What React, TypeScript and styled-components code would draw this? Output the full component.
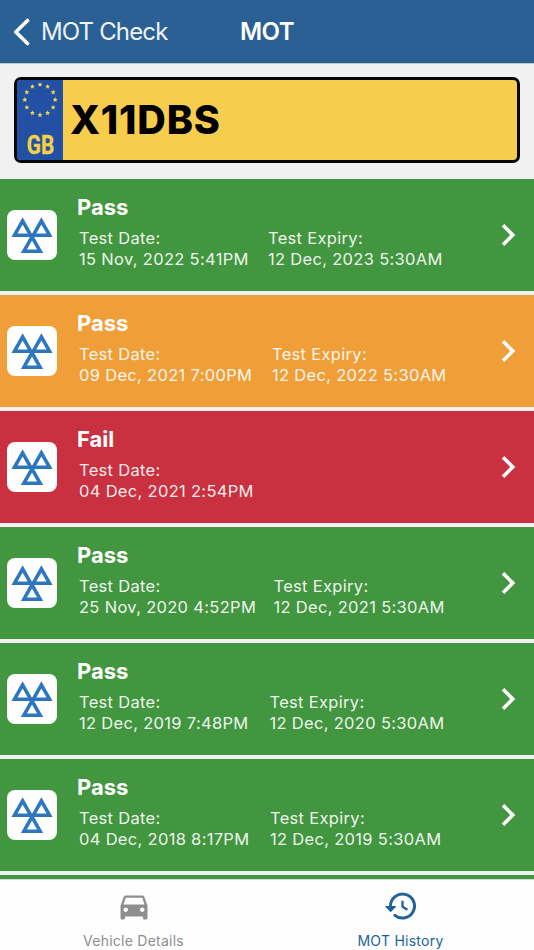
import React from "react";
import styled, { createGlobalStyle } from "styled-components";
import { MdChevronRight, MdDirectionsCar } from "react-icons/md";

const GlobalStyle = createGlobalStyle`
  * { box-sizing: border-box; }
  body { margin: 0; background: #f1f1f1; font-family: Inter, "Liberation Sans", sans-serif; }
`;

const Screen = styled.div`
  display: flex;
  flex-direction: column;
  height: 950px;
  overflow: hidden;
  background: #f1f1f1;
`;

const Header = styled.header`
  display: grid;
  grid-template-columns: 1fr auto 1fr;
  align-items: center;
  flex: none;
  height: 63px;
  color: #fff;
  background: #2a6093;
  box-shadow: 0 1px 0 #bcc6d0;
`;

const BackButton = styled.button`
  display: flex;
  align-items: center;
  gap: 11px;
  padding: 0 0 0 12px;
  border: 0;
  background: none;
  color: #edf3f8;
  font: 400 24px/30px Inter, sans-serif;
  letter-spacing: -0.85px;
  white-space: nowrap;
`;

const Title = styled.h1`
  margin: 0;
  font-size: 24px;
  line-height: 30px;
  font-weight: 600;
  letter-spacing: -0.5px;
`;

const PlateArea = styled.section`
  display: flex;
  flex: none;
  height: 116px;
  padding: 14px 14px 16px;
`;

const Plate = styled.div`
  display: flex;
  flex: 1;
  overflow: hidden;
  border: 3px solid #080808;
  border-radius: 7px;
  background: #f7cd4d;
`;

const CountryBand = styled.div`
  display: flex;
  flex-direction: column;
  align-items: center;
  width: 46px;
  background: #2150a5;
`;

const CountryCode = styled.span`
  margin-top: 14px;
  color: #f4d147;
  font: 700 25px/28px Roboto, sans-serif;
  -webkit-text-stroke: 0.4px #f4d147;
  transform: scaleX(0.83);
`;

const Registration = styled.span`
  align-self: center;
  margin-left: 7px;
  color: #000;
  font-size: 39.5px;
  line-height: 46px;
  font-weight: 800;
  letter-spacing: 0.8px;
`;

const History = styled.main`
  display: flex;
  flex-direction: column;
  flex: 1;
  gap: 4px;
  min-height: 0;
  overflow: hidden;
`;

const tones = { green: "#439640", amber: "#f09e38", red: "#c93140" };

const Row = styled.article<{ $tone: keyof typeof tones }>`
  display: grid;
  grid-template-columns: 50px 1fr 44px;
  align-items: center;
  column-gap: 20px;
  flex: none;
  height: 112px;
  padding: 0 4px 0 7px;
  color: #fff;
  background: ${({ $tone }) => tones[$tone]};
`;

const LogoTile = styled.div`
  display: flex;
  width: 50px;
  height: 50px;
  border-radius: 8px;
  background: #fff;
`;

const Summary = styled.div`
  padding-bottom: 7px;
`;

const Result = styled.h2`
  margin: 0 0 7px;
  font-size: 22px;
  line-height: 28px;
  font-weight: 700;
`;

const Tests = styled.div<{ $offset: number }>`
  display: grid;
  grid-template-columns: ${({ $offset }) => $offset}px auto;
  padding-left: 2px;
`;

const Detail = styled.div`
  color: rgba(255, 255, 255, 0.93);
  font-size: 16.5px;
  line-height: 20.7px;
  letter-spacing: 0.31px;
  white-space: nowrap;
`;

const TabBar = styled.nav`
  display: grid;
  grid-template-columns: 1fr 1fr;
  flex: none;
  height: 70px;
  background: #fefefe;
  box-shadow: 0 -1px 0 #d6dbd6;
`;

const Tab = styled.button<{ $active?: boolean }>`
  display: flex;
  flex-direction: column;
  align-items: center;
  padding: 8px 0 0;
  border: 0;
  background: none;
  color: ${({ $active }) => ($active ? "#20639b" : "#8e8e8e")};
  font: 400 14px/18px Inter, sans-serif;
  letter-spacing: 0.25px;
`;

const TabLabel = styled.span`
  margin-top: 8px;
`;

const starPoints = Array.from({ length: 10 }, (_, i) => {
  const r = i % 2 ? 1.2 : 2.7;
  const a = (i * Math.PI) / 5 - Math.PI / 2;
  return `${(r * Math.cos(a)).toFixed(2)},${(r * Math.sin(a)).toFixed(2)}`;
}).join(" ");

const Stars = () => (
  <svg width="40" height="38" viewBox="0 0 40 38" fill="#f2d64c">
    {Array.from({ length: 12 }, (_, i) => {
      const a = (i * Math.PI) / 6;
      return (
        <polygon
          key={i}
          points={starPoints}
          transform={`translate(${20 + 15.2 * Math.sin(a)} ${19.8 - 15.2 * Math.cos(a)})`}
        />
      );
    })}
  </svg>
);

const BackIcon = () => (
  <svg width="18" height="30" viewBox="0 0 18 30" fill="none" stroke="#fff" strokeWidth="3.6" strokeLinecap="round" strokeLinejoin="round">
    <path d="M15.5 3.5 3.8 15l11.7 11.5" />
  </svg>
);

const MotLogo = () => (
  <svg width="50" height="50" viewBox="0 0 50 50" fill="none" stroke="#2e76bd" strokeWidth="3.6">
    <path d="M15.6 10.9 7.5 25.2h16.2ZM34.4 10.9 26.3 25.2h16.2ZM25 26.8 16.9 41.2h16.2Z" />
  </svg>
);

const HistoryIcon = () => (
  <svg width="36" height="36" viewBox="0 0 24 24" fill="none" stroke="currentColor" strokeWidth="2" strokeLinecap="round" strokeLinejoin="round">
    <path d="M5 12a8 8 0 1 1 2.9 6.2" />
    <path d="M13 8.5v4l3.3 2" strokeWidth="1.55" strokeLinecap="butt" />
    <path d="M2 12.4h6.2L5.1 15.6Z" fill="currentColor" strokeWidth="0.9" />
  </svg>
);

type Test = {
  tone: keyof typeof tones;
  result: string;
  date: string;
  expiry?: string;
  offset: number;
};

const tests: Test[] = [
  { tone: "green", result: "Pass", date: "15 Nov, 2022 5:41PM", expiry: "12 Dec, 2023 5:30AM", offset: 189 },
  { tone: "amber", result: "Pass", date: "09 Dec, 2021 7:00PM", expiry: "12 Dec, 2022 5:30AM", offset: 193 },
  { tone: "red", result: "Fail", date: "04 Dec, 2021 2:54PM", offset: 193 },
  { tone: "green", result: "Pass", date: "25 Nov, 2020 4:52PM", expiry: "12 Dec, 2021 5:30AM", offset: 194.5 },
  { tone: "green", result: "Pass", date: "12 Dec, 2019 7:48PM", expiry: "12 Dec, 2020 5:30AM", offset: 190.5 },
  { tone: "green", result: "Pass", date: "04 Dec, 2018 8:17PM", expiry: "12 Dec, 2019 5:30AM", offset: 191 },
];

export default function App() {
  return (
    <Screen>
      <GlobalStyle />
      <Header>
        <BackButton><BackIcon />MOT Check</BackButton>
        <Title>MOT</Title>
      </Header>
      <PlateArea>
        <Plate>
          <CountryBand><Stars /><CountryCode>GB</CountryCode></CountryBand>
          <Registration>X11DBS</Registration>
        </Plate>
      </PlateArea>
      <History>
        {tests.map((test) => (
          <Row key={test.date} $tone={test.tone}>
            <LogoTile><MotLogo /></LogoTile>
            <Summary>
              <Result>{test.result}</Result>
              <Tests $offset={test.offset}>
                <Detail>Test Date:<br />{test.date}</Detail>
                {test.expiry && <Detail>Test Expiry:<br />{test.expiry}</Detail>}
              </Tests>
            </Summary>
            <MdChevronRight size={44} />
          </Row>
        ))}
        <Row $tone="green" />
      </History>
      <TabBar>
        <Tab><MdDirectionsCar size={36} /><TabLabel>Vehicle Details</TabLabel></Tab>
        <Tab $active><HistoryIcon /><TabLabel>MOT History</TabLabel></Tab>
      </TabBar>
    </Screen>
  );
}
